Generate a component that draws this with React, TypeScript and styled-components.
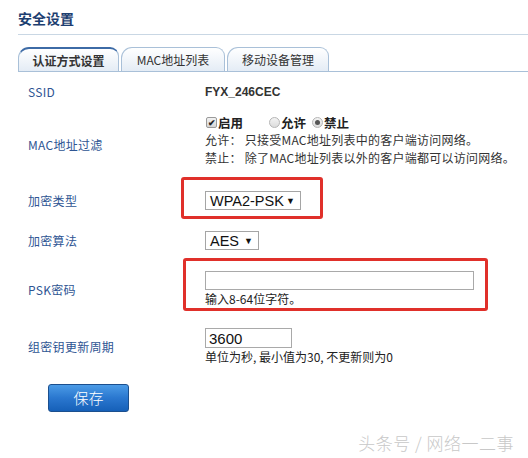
import React from "react";
import styled, { createGlobalStyle } from "styled-components";

const Global = createGlobalStyle`
  html, body { margin: 0; padding: 0; background: #fff; }
  body { font-family: "Noto Sans CJK SC", "Liberation Sans", sans-serif; color: #333; }
  * { box-sizing: border-box; }
`;

const Page = styled.div`
  width: 528px;
  height: 458px;
  overflow: hidden;
  display: flex;
  flex-direction: column;
`;

const Header = styled.div`
  margin-left: 18px;
  padding-top: 10px;
  padding-bottom: 8px;
  border-bottom: 1px solid #c9d7e4;
`;

const Title = styled.h1`
  margin: 0;
  font-size: 14px;
  line-height: 16px;
  font-weight: bold;
  color: #1d3e70;
`;

const TabBar = styled.div`
  margin: 12px 0 0 18px;
  display: flex;
  align-items: flex-end;
  gap: 2px;
  border-bottom: 1px solid #a9c0d8;
  height: 25px;
`;

const Tab = styled.div<{ $active?: boolean; $w: number }>`
  width: ${(p) => p.$w}px;
  height: 24px;
  display: flex;
  align-items: center;
  justify-content: center;
  font-size: 12px;
  line-height: 14px;
  font-weight: ${(p) => (p.$active ? "bold" : "normal")};
  color: #333;
  border: 1px solid #a9c0d8;
  border-top: ${(p) => (p.$active ? "2px solid #3d6ba6" : "1px solid #a9c0d8")};
  border-bottom: none;
  border-radius: 11px 9px 0 0;
  background: linear-gradient(#ffffff, #e4ecf5);
  padding-top: 1px;
`;

const Form = styled.div`
  padding-top: 6px;
  display: flex;
  flex-direction: column;
`;

const Row = styled.div<{ $mt?: number; $h?: number }>`
  display: grid;
  grid-template-columns: 177px 1fr;
  align-items: center;
  padding-left: 28px;
  margin-top: ${(p) => p.$mt ?? 0}px;
  min-height: ${(p) => p.$h ?? 0}px;
`;

const Label = styled.div<{ $dy?: number }>`
  font-size: 12px;
  line-height: 14px;
  letter-spacing: 0.3px;
  color: #2e5593;
  position: relative;
  top: ${(p) => p.$dy ?? 0}px;
`;

const Value = styled.div`
  font-family: "Liberation Sans", "Noto Sans CJK SC", sans-serif;
  font-size: 12px;
  font-weight: bold;
  color: #333;
`;

const Options = styled.div`
  align-self: start;
  display: flex;
  flex-direction: column;
`;

const Line = styled.div`
  font-size: 12px;
  line-height: 18px;
  height: 18px;
  letter-spacing: 0.25px;
  color: #333;
  white-space: nowrap;
`;

const ChoiceRow = styled.div`
  display: flex;
  align-items: center;
  height: 18px;
  font-size: 12.5px;
  font-weight: bold;
  color: #222;
`;

const Choice = styled.span<{ $gap?: number }>`
  display: inline-flex;
  align-items: center;
  margin-right: ${(p) => p.$gap ?? 0}px;
`;

const CheckBox = styled.span`
  width: 11px;
  height: 11px;
  margin: 0 1px 0 1px;
  border: 1px solid #9a9a9a;
  border-radius: 2px;
  background: linear-gradient(#f2f2f2, #d6d6d6);
  display: inline-flex;
  align-items: center;
  justify-content: center;
  font-size: 9px;
  line-height: 9px;
  color: #222;
  font-weight: bold;
`;

const Radio = styled.span<{ $on?: boolean }>`
  width: 11px;
  height: 11px;
  margin-right: 1px;
  border: 1px solid #b5b5b5;
  border-radius: 50%;
  background: linear-gradient(#f3f3f3, #dcdcdc);
  display: inline-flex;
  align-items: center;
  justify-content: center;
  &::after {
    content: "";
    display: ${(p) => (p.$on ? "block" : "none")};
    width: 5px;
    height: 5px;
    border-radius: 50%;
    background: #555;
  }
`;

const Mark = styled.div<{ $pad: string; $ml: number; $w: number }>`
  border: 3px solid #e0302a;
  border-radius: 3px;
  padding: ${(p) => p.$pad};
  margin-left: ${(p) => p.$ml}px;
  width: ${(p) => p.$w}px;
`;

const Select = styled.div<{ $w: number }>`
  width: ${(p) => p.$w}px;
  height: 19px;
  border: 1px solid #a5a5a5;
  background: #fff;
  display: flex;
  align-items: center;
  justify-content: space-between;
  padding: 0 5px 0 4px;
  font-family: "Liberation Sans", Arial, sans-serif;
  font-size: 14.5px;
  white-space: nowrap;
  color: #111;
`;

const Arrow = styled.span`
  font-size: 9px;
  color: #111;
  flex-shrink: 0;
`;

const Input = styled.div<{ $w: number; $h: number }>`
  width: ${(p) => p.$w}px;
  height: ${(p) => p.$h}px;
  border: 1px solid #a9a9a9;
  background: #fff;
  padding: 0 3px;
  display: flex;
  align-items: center;
  font-family: "Liberation Sans", Arial, sans-serif;
  font-size: 15px;
  color: #111;
`;

const Hint = styled.div`
  font-size: 12px;
  line-height: 18px;
  height: 18px;
  color: #222;
  white-space: nowrap;
`;

const Stack = styled.div`
  display: flex;
  flex-direction: column;
`;

const SaveButton = styled.button`
  margin: 18px 0 0 48px;
  width: 81px;
  height: 28px;
  border: 1px solid #1b4f8e;
  border-radius: 3px;
  background: linear-gradient(#4b9be6, #2a77cf 50%, #1660b8);
  color: #fff;
  font-family: "Noto Sans CJK SC", sans-serif;
  font-size: 15px;
  font-weight: 300;
  line-height: 26px;
  padding: 0;
`;

const Footer = styled.div`
  margin-top: 21px;
  display: flex;
  justify-content: flex-end;
  padding-right: 14px;
  font-size: 17px;
  line-height: 20px;
  font-weight: 300;
  color: #c8c8c8;
  letter-spacing: 0.5px;
`;

export default function App() {
  return (
    <Page>
      <Global />
      <Header>
        <Title>安全设置</Title>
      </Header>
      <TabBar>
        <Tab $active $w={101}>认证方式设置</Tab>
        <Tab $w={104}>MAC地址列表</Tab>
        <Tab $w={102}>移动设备管理</Tab>
      </TabBar>
      <Form>
        <Row $h={28}>
          <Label>SSID</Label>
          <Value>FYX_246CEC</Value>
        </Row>
        <Row $mt={7} $h={64}>
          <Label>MAC地址过滤</Label>
          <Options>
            <ChoiceRow>
              <Choice $gap={26}>
                <CheckBox>✔</CheckBox>启用
              </Choice>
              <Choice $gap={6}>
                <Radio />允许
              </Choice>
              <Choice>
                <Radio $on />禁止
              </Choice>
            </ChoiceRow>
            <Line>允许： 只接受MAC地址列表中的客户端访问网络。</Line>
            <Line>禁止： 除了MAC地址列表以外的客户端都可以访问网络。</Line>
          </Options>
        </Row>
        <Row>
          <Label $dy={3}>加密类型</Label>
          <Mark $pad="11px 0 6px 21px" $ml={-24} $w={142}>
            <Select $w={96}>
              WPA2-PSK<Arrow>▼</Arrow>
            </Select>
          </Mark>
        </Row>
        <Row $mt={12}>
          <Label>加密算法</Label>
          <Select $w={54}>
            AES<Arrow>▼</Arrow>
          </Select>
        </Row>
        <Row $mt={8}>
          <Label $dy={5}>PSK密码</Label>
          <Mark $pad="10px 0 0 19px" $ml={-22} $w={305}>
            <Input $w={269} $h={19} />
            <Hint>输入8-64位字符。</Hint>
          </Mark>
        </Row>
        <Row $mt={17}>
          <Label>组密钥更新周期</Label>
          <Stack>
            <Input $w={87} $h={20}>3600</Input>
            <Hint>单位为秒, 最小值为30, 不更新则为0</Hint>
          </Stack>
        </Row>
      </Form>
      <div>
        <SaveButton>保存</SaveButton>
      </div>
      <Footer>头条号 / 网络一二事</Footer>
    </Page>
  );
}
